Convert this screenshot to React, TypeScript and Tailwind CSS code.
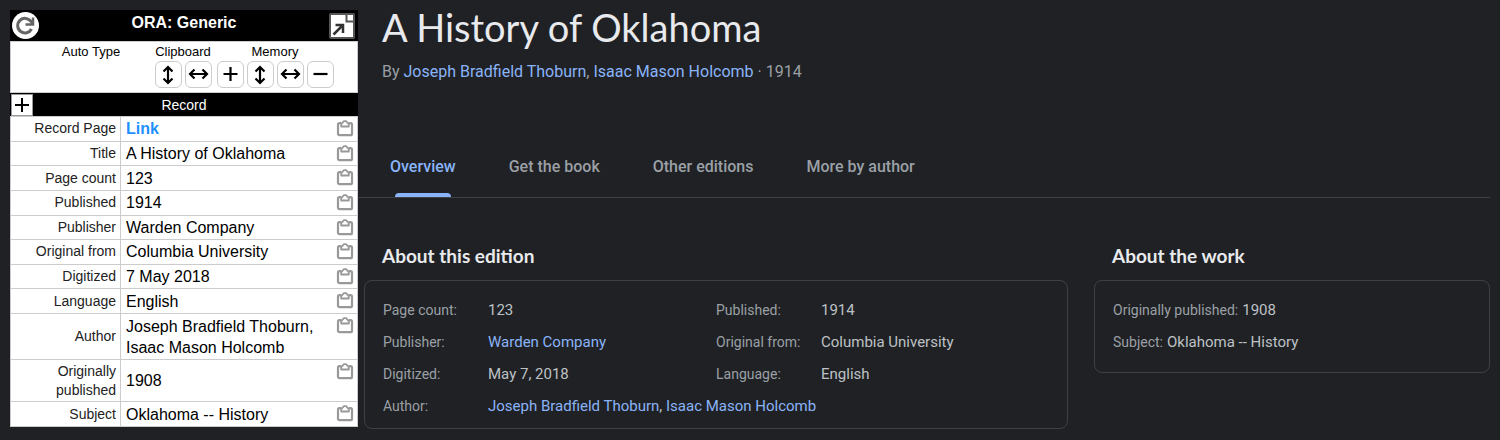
import type { ReactNode } from "react"
import { clsx } from "clsx"

const AUTHORS = ["Joseph Bradfield Thoburn", "Isaac Mason Holcomb"]
const TABS = ["Overview", "Get the book", "Other editions", "More by author"]

const RECORD: [string, string][] = [
  ["Record Page", "Link"],
  ["Title", "A History of Oklahoma"],
  ["Page count", "123"],
  ["Published", "1914"],
  ["Publisher", "Warden Company"],
  ["Original from", "Columbia University"],
  ["Digitized", "7 May 2018"],
  ["Language", "English"],
  ["Author", "Joseph Bradfield Thoburn, Isaac Mason Holcomb"],
  ["Originally published", "1908"],
  ["Subject", "Oklahoma -- History"],
]

const ICONS = {
  vertical: "M12 5v16M7.5 9.5L12 5l4.5 4.5M7.5 16.5L12 21l4.5-4.5",
  horizontal: "M4 12h17M8.5 7.5L4 12l4.5 4.5M16.500 7.5L21 12l-4.5 4.5",
  plus: "M12.500 5v14M5.500 12h14",
  minus: "M5.500 12h14",
}

function ToolButton({ icon, label }: { icon: keyof typeof ICONS; label: string }) {
  return (
    <button aria-label={label} className="size-[27px] rounded-md border border-[#ccc] bg-white">
      <svg viewBox="0 0 25 25" className="size-full" fill="none" stroke="#000" strokeWidth="2.2">
        <path d={ICONS[icon]} />
      </svg>
    </button>
  )
}

function ToolGroup({ title, className, children }: { title: string; className?: string; children?: ReactNode }) {
  return (
    <div className={className}>
      <div className="text-center text-[13px] leading-[19px]">{title}</div>
      <div className="flex gap-[3px]">{children}</div>
    </div>
  )
}

function ClipboardIcon() {
  return (
    <svg width="18" height="18" viewBox="0 0 18 18" fill="none" stroke="#999" strokeWidth="2.2" strokeLinejoin="round">
      <path d="M5 4.200H3.500a1.500 1.500 0 0 0-1.500 1.500v9a1.500 1.500 0 0 0 1.500 1.500h11a1.500 1.500 0 0 0 1.500-1.500v-9a1.500 1.500 0 0 0-1.500-1.500H13" />
      <path d="M5.200 7.500V5L8 2.200h2L12.800 5v2.500z" strokeWidth="1.800" />
    </svg>
  )
}

function RecordPanel() {
  return (
    <aside className="w-[348px] shrink-0 self-start bg-white font-['Liberation_Sans',sans-serif] text-black">
      <header className="flex h-[31px] items-center justify-between bg-black pr-[3px] pl-0.5 text-white">
        <button aria-label="Refresh" className="size-[27px] rounded-full bg-white">
          <svg viewBox="0 0 27 27" className="size-full" fill="none" stroke="#666" strokeWidth="3">
            <path d="M19.500 17A7.300 7.300 0 1 1 19 9.500l2 2" />
            <path d="M21 5.500v7h-7.500" strokeWidth="2.500" />
          </svg>
        </button>
        <h2 className="pb-1.5 text-base font-bold">ORA: Generic</h2>
        <button aria-label="Pop out" className="size-[26px]">
          <svg viewBox="0 0 26 26" className="size-full" fill="#fff" stroke="#555" strokeWidth="2">
            <rect x="1" y="1" width="24" height="24" rx="1" />
            <path d="M17.500 1v7.500H25" />
            <path d="M4.500 21.500L14 12M6.500 12H14v8" fill="none" stroke="#333" strokeWidth="2.500" />
          </svg>
        </button>
      </header>

      <div className="flex justify-center gap-[5px] border border-[#ccc] pr-0.5 pb-1">
        <ToolGroup title="Auto Type" className="w-[117px]" />
        <ToolGroup title="Clipboard">
          <ToolButton icon="vertical" label="Clipboard vertical" />
          <ToolButton icon="horizontal" label="Clipboard horizontal" />
        </ToolGroup>
        <ToolGroup title="Memory">
          <ToolButton icon="plus" label="Memory add" />
          <ToolButton icon="vertical" label="Memory vertical" />
          <ToolButton icon="horizontal" label="Memory horizontal" />
          <ToolButton icon="minus" label="Memory remove" />
        </ToolGroup>
      </div>

      <div className="flex h-[23px] items-center bg-black px-px text-white">
        <button aria-label="Add record" className="size-[22px] border border-[#999] bg-white">
          <svg viewBox="0 0 20 20" className="size-full" stroke="#000" strokeWidth="2">
            <path d="M10 3v14M3 10h14" />
          </svg>
        </button>
        <h3 className="flex-1 pr-[22px] text-center text-sm">Record</h3>
      </div>

      <table className="h-[311px] w-full table-fixed border-collapse">
        <tbody>
          {RECORD.map(([label, value]) => (
            <tr key={label}>
              <th scope="row" className="w-[110px] border border-[#ccc] py-px pr-1 pl-1 text-right text-sm leading-[19px] font-normal text-[#222]">
                {label}
              </th>
              <td className="border-y border-[#ccc] py-px pl-[5px] text-base leading-[21px]">
                {value === "Link" ? <a href="#record" className="font-bold text-[#1e90ff]">{value}</a> : value}
              </td>
              <td className="w-[22px] border-y border-r border-[#ccc] pt-0.5 align-top">
                <button aria-label={`Copy ${label}`} className="block">
                  <ClipboardIcon />
                </button>
              </td>
            </tr>
          ))}
        </tbody>
      </table>
    </aside>
  )
}

function AuthorLinks() {
  return (
    <>
      <a href="#thoburn" className="text-[#8ab4f8]">{AUTHORS[0]}</a>
      {", "}
      <a href="#holcomb" className="text-[#8ab4f8]">{AUTHORS[1]}</a>
    </>
  )
}

function Fact({ label, className, children }: { label: string; className?: string; children: ReactNode }) {
  return (
    <div className={clsx("flex", className)}>
      <dt className="w-[105px] shrink-0 text-sm leading-6 text-[#9aa0a6]">{label}:</dt>
      <dd className="text-[15px] leading-6">{children}</dd>
    </div>
  )
}

function WorkFact({ label, children }: { label: string; children: ReactNode }) {
  return (
    <div className="flex gap-1">
      <dt className="text-sm leading-6 text-[#9aa0a6]">{label}:</dt>
      <dd className="text-[15px] leading-6">{children}</dd>
    </div>
  )
}

const HEADING = "px-[18px] font-['Lato',sans-serif] text-[19px] leading-6 font-bold text-[#e8eaed]"
const CARD = "mt-3 rounded-lg border border-[#3c4043] px-[18px] pt-[17px]"

export default function App() {
  return (
    <div className="flex min-h-screen bg-[#202124] font-['Roboto',sans-serif] text-[#bdc1c6]">
      <div className="flex pt-2.5 pl-2.5">
        <RecordPanel />
      </div>
      <main className="min-w-0 flex-1 pt-[5px] pr-2.5">
        <div className="pl-6">
          <h1 className="font-['Lato',sans-serif] text-[38px] leading-[44px] text-[#e8eaed]">A History of Oklahoma</h1>
          <p className="mt-[11px] text-base leading-6 text-[#9aa0a6]">
            By <AuthorLinks /> · 1914
          </p>
        </div>

        <nav className="mt-[57px] flex gap-[53px] border-b border-[#3c4043] pl-8">
          {TABS.map((tab, i) => (
            <a
              key={tab}
              href="#tab"
              className={clsx(
                "relative h-14 pt-3.5 text-base leading-6 font-medium",
                i === 0 ? "text-[#8ab4f8]" : "text-[#9aa0a6]",
              )}
            >
              {tab}
              {i === 0 && <span className="absolute inset-x-[5px] bottom-0 h-1 rounded-t bg-[#8ab4f8]" />}
            </a>
          ))}
        </nav>

        <div className="mt-[46px] grid grid-cols-[16fr_9fr] items-start gap-[26px] pl-1.5">
          <section>
            <h2 className={HEADING}>About this edition</h2>
            <dl className={clsx(CARD, "grid grid-cols-2 gap-y-2 pb-2.5")}>
              <Fact label="Page count">123</Fact>
              <Fact label="Published">1914</Fact>
              <Fact label="Publisher"><a href="#publisher" className="text-[#8ab4f8]">Warden Company</a></Fact>
              <Fact label="Original from">Columbia University</Fact>
              <Fact label="Digitized">May 7, 2018</Fact>
              <Fact label="Language">English</Fact>
              <Fact label="Author" className="col-span-2"><AuthorLinks /></Fact>
            </dl>
          </section>
          <section>
            <h2 className={HEADING}>About the work</h2>
            <dl className={clsx(CARD, "flex flex-col gap-2 pb-[18px]")}>
              <WorkFact label="Originally published">1908</WorkFact>
              <WorkFact label="Subject">Oklahoma -- History</WorkFact>
            </dl>
          </section>
        </div>
      </main>
    </div>
  )
}
